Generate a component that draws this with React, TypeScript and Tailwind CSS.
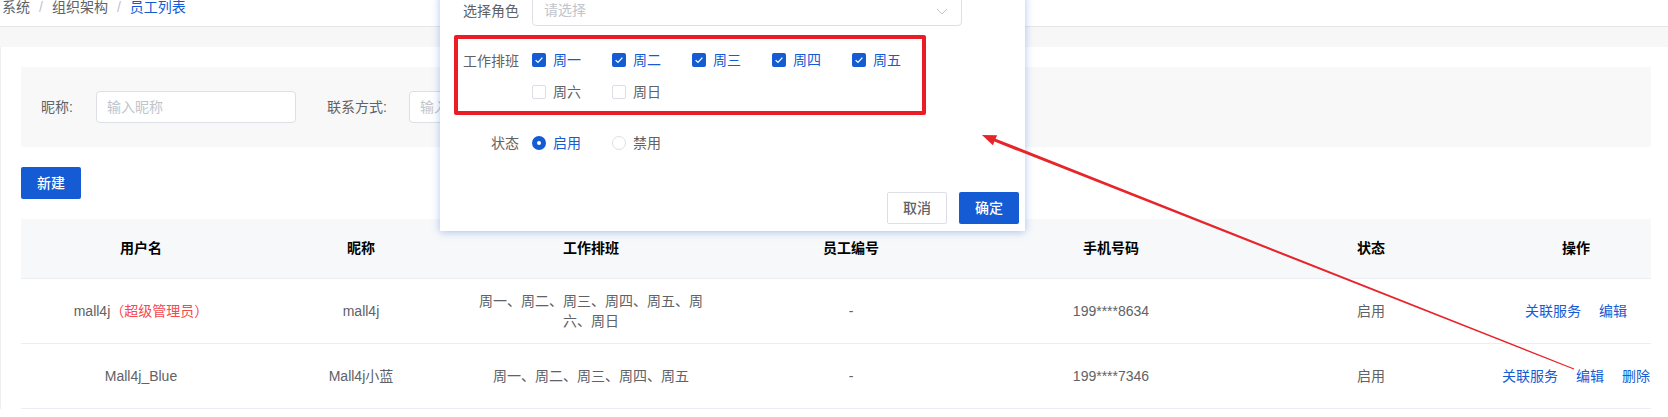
import React from "react";

const BLUE = "#155bd4";

function Check({ label, checked }: { label: string; checked: boolean }) {
  return (
    <div className="flex w-[80px] items-center">
      {checked ? (
        <span className="flex h-[14px] w-[14px] items-center justify-center rounded-[2px] bg-[#155bd4]">
          <svg width="14" height="14" viewBox="0 0 14 14">
            <path d="M3.6 7.1 L6 9.4 L10.4 4.6" fill="none" stroke="white" strokeWidth="1.3" />
          </svg>
        </span>
      ) : (
        <span className="h-[14px] w-[14px] rounded-[2px] border border-[#dcdfe6] bg-white" />
      )}
      <span className={checked ? "ml-[7px] text-[#155bd4]" : "ml-[7px] text-[#606266]"}>{label}</span>
    </div>
  );
}

function Radio({ label, checked }: { label: string; checked: boolean }) {
  return (
    <div className="flex w-[80px] items-center">
      {checked ? (
        <span className="flex h-[14px] w-[14px] items-center justify-center rounded-full bg-[#155bd4]">
          <span className="h-[4px] w-[4px] rounded-full bg-white" />
        </span>
      ) : (
        <span className="h-[14px] w-[14px] rounded-full border border-[#dcdfe6] bg-white" />
      )}
      <span className={checked ? "ml-[7px] text-[#155bd4]" : "ml-[7px] text-[#606266]"}>{label}</span>
    </div>
  );
}

const GRID = "grid grid-cols-[240px_200px_260px_260px_260px_260px_150px]";

export default function App() {
  const headers = ["用户名", "昵称", "工作排班", "员工编号", "手机号码", "状态", "操作"];
  return (
    <div className="relative h-[417px] w-[1668px] overflow-hidden bg-white font-['Liberation_Sans','Noto_Sans_CJK_SC',sans-serif] text-[14px] text-[#606266]">
      {/* breadcrumb */}
      <div className="flex h-[27px] items-start border-b border-[#e6e6e6] pl-[2px] leading-[15px]">
        <span className="text-[#606266]">系统</span>
        <span className="mx-[9px] text-[#c0c4cc]">/</span>
        <span className="text-[#606266]">组织架构</span>
        <span className="mx-[9px] text-[#c0c4cc]">/</span>
        <span className="text-[#155bd4]">员工列表</span>
      </div>
      <div className="h-[20px] bg-[#f7f7f7]" />

      {/* content */}
      <div className="border-l border-[#efefef] pl-[20px] pr-[17px] pt-[20px]">
        <div className="flex h-[80px] items-center bg-[#f8f8f9] pl-[20px]">
          <span className="w-[55px]">昵称:</span>
          <div className="flex h-[32px] w-[200px] items-center rounded-[4px] border border-[#dcdfe6] bg-white pl-[10px] text-[#c0c4cc]">
            输入昵称
          </div>
          <span className="ml-[31px] w-[82px]">联系方式:</span>
          <div className="flex h-[32px] w-[200px] items-center rounded-[4px] border border-[#dcdfe6] bg-white pl-[10px] text-[#c0c4cc]">
            输入联系方式
          </div>
        </div>

        <button className="mt-[20px] flex h-[32px] w-[60px] items-center justify-center rounded-[2px] bg-[#155bd4] font-medium text-white">
          新建
        </button>

        <div className="mt-[20px]">
          <div className={`${GRID} h-[60px] border-b border-[#ebeef5] bg-[#f7f8fa]`}>
            {headers.map((h) => (
              <div key={h} className="flex items-center justify-center font-bold text-black">
                {h}
              </div>
            ))}
          </div>
          <div className={`${GRID} h-[65px] border-b border-[#ebeef5] leading-[20px]`}>
            <div className="flex items-center justify-center px-3">
              <span>mall4j</span>
              <span className="text-[#f5494f]">（超级管理员）</span>
            </div>
            <div className="flex items-center justify-center px-3">mall4j</div>
            <div className="flex items-center justify-center px-3 text-center">周一、周二、周三、周四、周五、周六、周日</div>
            <div className="flex items-center justify-center px-3">-</div>
            <div className="flex items-center justify-center px-3">199****8634</div>
            <div className="flex items-center justify-center px-3">启用</div>
            <div className="flex items-center justify-center gap-[18px] whitespace-nowrap text-[#155bd4]">
              <span>关联服务</span>
              <span>编辑</span>
            </div>
          </div>
          <div className={`${GRID} h-[65px] border-b border-[#ebeef5] leading-[20px]`}>
            <div className="flex items-center justify-center px-3">Mall4j_Blue</div>
            <div className="flex items-center justify-center px-3">Mall4j小蓝</div>
            <div className="flex items-center justify-center px-3 text-center">周一、周二、周三、周四、周五</div>
            <div className="flex items-center justify-center px-3">-</div>
            <div className="flex items-center justify-center px-3">199****7346</div>
            <div className="flex items-center justify-center px-3">启用</div>
            <div className="flex items-center justify-center gap-[18px] whitespace-nowrap text-[#155bd4]">
              <span>关联服务</span>
              <span>编辑</span>
              <span>删除</span>
            </div>
          </div>
        </div>
      </div>

      {/* dialog */}
      <div className="absolute left-[440px] top-[-6px] w-[585px] bg-white pb-[7px] shadow-[0_1px_8px_rgba(21,91,212,0.35)]">
        <div className="flex h-[32px] items-center">
          <div className="w-[92px] pr-[13px] pt-[2px] text-right">选择角色</div>
          <div className="relative flex h-[32px] w-[430px] items-center rounded-[4px] border border-[#dcdfe6] pl-[11px] text-[#c0c4cc]">
            请选择
            <svg className="absolute right-[13px] top-[13px]" width="12" height="7" viewBox="0 0 12 7">
              <path d="M1 1 L6 6 L11 1" fill="none" stroke="#c0c4cc" strokeWidth="1" />
            </svg>
          </div>
        </div>
        <div className="mt-[18px] flex">
          <div className="w-[92px] pr-[13px] text-right leading-[34px]">工作排班</div>
          <div className="flex flex-col">
            <div className="flex h-[32px] items-center">
              <Check label="周一" checked />
              <Check label="周二" checked />
              <Check label="周三" checked />
              <Check label="周四" checked />
              <Check label="周五" checked />
            </div>
            <div className="flex h-[32px] items-center">
              <Check label="周六" checked={false} />
              <Check label="周日" checked={false} />
            </div>
          </div>
        </div>
        <div className="mt-[19px] flex h-[32px] items-center">
          <div className="w-[92px] pr-[13px] text-right">状态</div>
          <Radio label="启用" checked />
          <Radio label="禁用" checked={false} />
        </div>
        <div className="mt-[33px] flex justify-end gap-[12px] pr-[6px]">
          <button className="flex h-[32px] w-[60px] items-center justify-center rounded-[2px] border border-[#dcdfe6] bg-white font-medium text-[#606266]">
            取消
          </button>
          <button className="flex h-[32px] w-[60px] items-center justify-center rounded-[2px] bg-[#155bd4] font-medium text-white">
            确定
          </button>
        </div>
      </div>

      {/* red annotation box */}
      <div className="pointer-events-none absolute left-[454px] top-[35px] h-[80px] w-[472px] rounded-[2px] border-[4px] border-[#ec1c24]" />

      {/* red arrow */}
      <svg className="pointer-events-none absolute left-0 top-0" width="1668" height="417" viewBox="0 0 1668 417">
        <polygon
          points="982,135 997.2,135.3 995.6,138.7 1574.2,368.5 1573.8,369.5 994.4,141.6 992.9,145.2"
          fill="#e8242b"
        />
      </svg>
      <span className="hidden" style={{ color: BLUE }} />
    </div>
  );
}
